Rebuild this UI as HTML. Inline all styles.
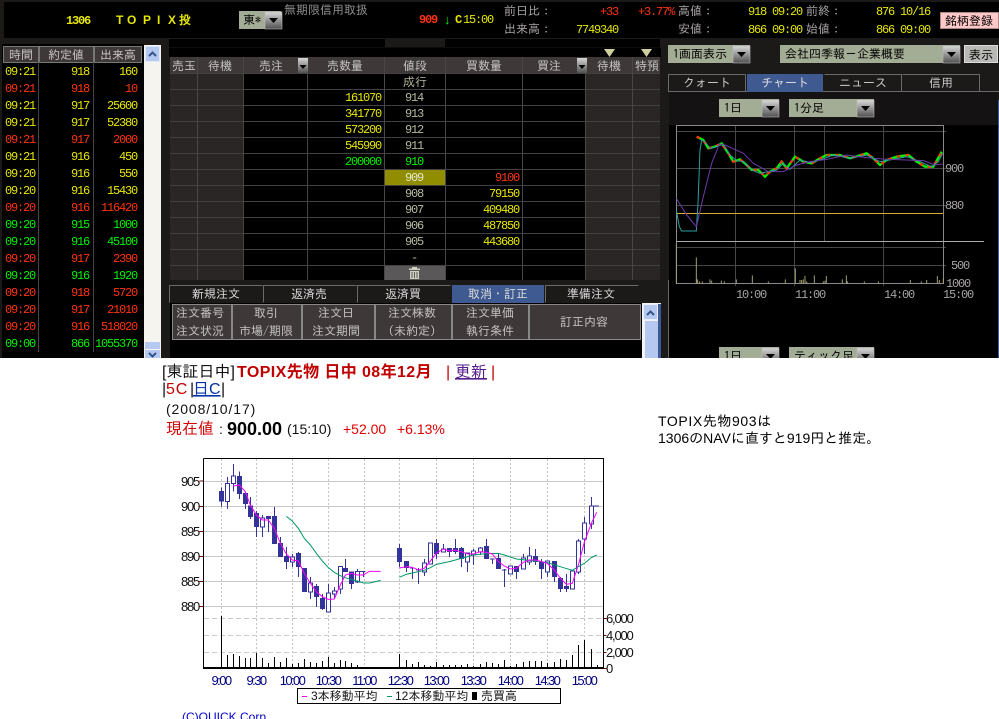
<!DOCTYPE html>
<html><head><meta charset="utf-8"><style>
html,body{margin:0;padding:0;background:#fff;overflow:hidden}
svg{display:block}
text{font-family:"Liberation Sans","IPAGothic","Noto Sans CJK JP",sans-serif;font-size:12px}
.j{font-family:"IPAGothic","Noto Sans CJK JP",sans-serif;font-size:12px}
.m{font-family:"Liberation Mono",monospace;font-size:12px;letter-spacing:-1.2px}
.e{text-anchor:end}.c{text-anchor:middle}
.y{fill:#e6e600}.r{fill:#ff3310}.g{fill:#00f000}.p{fill:#b8b8a0}.w{fill:#c8c4c4}.k{fill:#a8a4a4}
.n{fill:#000080;font-size:13px;letter-spacing:-1.6px;text-anchor:middle}
.a{fill:#111;font-size:13px;letter-spacing:-1.2px}
</style></head><body>
<svg width="999" height="719" viewBox="0 0 999 719" xmlns="http://www.w3.org/2000/svg">
<defs>
<linearGradient id="b" x1="0" y1="0" x2="0" y2="1"><stop offset="0" stop-color="#d8d8d8"/><stop offset="1" stop-color="#505050"/></linearGradient>
<g id="ar"><rect width="17" height="17" fill="url(#b)" stroke="#bbb" stroke-width=".6"/><path d="M4 6h9l-4.500 5z" fill="#000"/></g>
<g id="ar2"><rect width="10" height="15" fill="url(#b)"/><path d="M1.500 7h7l-3.500 4z" fill="#000"/></g>
</defs>
<rect width="999" height="358" fill="#1c1919"/>
<!-- header -->
<rect x="4" y="2" width="995" height="36" fill="#000"/>
<text x="66" y="24" class="m y" style="font-weight:bold">1306</text>
<text x="116 127 143 157 168 179" y="24" class="y" style="font-size:12px;font-weight:bold">TOPIX投</text>
<rect x="239" y="11" width="42" height="18" fill="#a3ad95"/><text x="243" y="24" class="j" style="fill:#000">東*</text><use href="#ar" x="265" y="12"/>
<text x="284" y="14" class="j" style="fill:#909090">無期限信用取扱</text>
<text x="419" y="23" class="m r" style="font-weight:bold">909</text>
<text x="444" y="24" class="g" style="font-size:13px">↓</text>
<text x="455" y="23" class="m y" style="font-weight:bold">C</text>
<text x="463" y="23" class="m y">15:00</text>
<text x="504" y="15" class="j k">前日比：</text><text x="504" y="33" class="j k">出来高：</text>
<text x="618" y="15" class="m e r">+33</text><text x="674" y="15" class="m e r">+3.77%</text><text x="618" y="33" class="m e y">7749340</text>
<text x="678" y="15" class="j k">高値：</text><text x="678" y="33" class="j k">安値：</text>
<text x="748" y="15" class="m y">918 09:20</text><text x="748" y="33" class="m y">866 09:00</text>
<text x="806" y="15" class="j k">前終：</text><text x="806" y="33" class="j k">始値：</text>
<text x="876" y="15" class="m y">876 10/16</text><text x="876" y="33" class="m y">866 09:00</text>
<rect x="940.500" y="12.500" width="58" height="16" fill="#ffc8c8" stroke="#a88"/><text x="945" y="25" class="j" style="fill:#000">銘柄登録</text>

<!-- left table -->
<rect x="2" y="44" width="142" height="314" fill="#000"/>
<g fill="#3e3838" stroke="#777" stroke-width="1"><rect x="3.500" y="46.500" width="35" height="16"/><rect x="39.500" y="46.500" width="54" height="16"/><rect x="94.500" y="46.500" width="47" height="16"/></g>
<text x="21" y="59" class="j c w">時間</text><text x="66" y="59" class="j c w">約定値</text><text x="118" y="59" class="j c w">出来高</text>
<path d="M38.500 62V352M93.500 62V352" stroke="#444"/>
<g>
<text class="m y" x="5" y="75">09:21</text><text class="m e y" x="89" y="75">918</text><text class="m e y" x="137" y="75">160</text>
<text class="m r" x="5" y="92">09:21</text><text class="m e r" x="89" y="92">918</text><text class="m e r" x="137" y="92">10</text>
<text class="m y" x="5" y="109">09:21</text><text class="m e y" x="89" y="109">917</text><text class="m e y" x="137" y="109">25600</text>
<text class="m y" x="5" y="126">09:21</text><text class="m e y" x="89" y="126">917</text><text class="m e y" x="137" y="126">52380</text>
<text class="m r" x="5" y="143">09:21</text><text class="m e r" x="89" y="143">917</text><text class="m e r" x="137" y="143">2000</text>
<text class="m y" x="5" y="160">09:21</text><text class="m e y" x="89" y="160">916</text><text class="m e y" x="137" y="160">450</text>
<text class="m y" x="5" y="177">09:20</text><text class="m e y" x="89" y="177">916</text><text class="m e y" x="137" y="177">550</text>
<text class="m y" x="5" y="194">09:20</text><text class="m e y" x="89" y="194">916</text><text class="m e y" x="137" y="194">15430</text>
<text class="m r" x="5" y="211">09:20</text><text class="m e r" x="89" y="211">916</text><text class="m e r" x="137" y="211">116420</text>
<text class="m g" x="5" y="228">09:20</text><text class="m e g" x="89" y="228">915</text><text class="m e g" x="137" y="228">1000</text>
<text class="m g" x="5" y="245">09:20</text><text class="m e g" x="89" y="245">916</text><text class="m e g" x="137" y="245">45100</text>
<text class="m r" x="5" y="262">09:20</text><text class="m e r" x="89" y="262">917</text><text class="m e r" x="137" y="262">2390</text>
<text class="m g" x="5" y="279">09:20</text><text class="m e g" x="89" y="279">916</text><text class="m e g" x="137" y="279">1920</text>
<text class="m r" x="5" y="296">09:20</text><text class="m e r" x="89" y="296">918</text><text class="m e r" x="137" y="296">5720</text>
<text class="m r" x="5" y="313">09:20</text><text class="m e r" x="89" y="313">917</text><text class="m e r" x="137" y="313">21010</text>
<text class="m r" x="5" y="330">09:20</text><text class="m e r" x="89" y="330">916</text><text class="m e r" x="137" y="330">518020</text>
<text class="m g" x="5" y="347">09:00</text><text class="m e g" x="89" y="347">866</text><text class="m e g" x="137" y="347">1055370</text>
</g>
<!-- left scrollbar -->
<rect x="144" y="45" width="17" height="313" fill="#f5f4ee"/>
<rect x="145.500" y="46.500" width="14" height="15" fill="#b4c8f0" stroke="#dfe8fa"/><path d="M149 56l3.500-3.500L156 56" fill="none" stroke="#33558c" stroke-width="2"/>
<rect x="145" y="342" width="15" height="7" fill="#b4c8f0"/><rect x="145" y="350" width="15" height="8" fill="#b4c8f0"/><path d="M149 353l3.500 3.500L156 353" fill="none" stroke="#33558c" stroke-width="2"/>

<!-- order book -->
<rect x="169" y="39" width="216" height="8" fill="#000"/><rect x="445" y="39" width="215" height="8" fill="#000"/>
<rect x="169" y="47.500" width="492" height="10" fill="#000"/>
<path d="M604 49h11l-5.500 8zM641 49h11l-5.500 8z" fill="#cfcfa0"/>
<rect x="170" y="57" width="490" height="223" fill="#000"/>
<rect x="170" y="73" width="74" height="207" fill="#2a2626"/><rect x="586" y="73" width="74" height="207" fill="#2a2626"/>
<rect x="170" y="57" width="490" height="16" fill="#3e3838"/>
<path d="M170 73.500H660M170 89.500H660M170 105.500H660M170 121.500H660M170 137.500H660M170 153.500H660M170 169.500H660M170 185.500H660M170 201.500H660M170 217.500H660M170 233.500H660M170 249.500H660M170 265.500H660" stroke="#434040"/>
<path d="M197.500 57V280M243.500 57V280M307.500 57V280M384.500 57V280M445.500 57V280M522.500 57V280M585.500 57V280M632.500 57V280" stroke="#4a4646"/>
<rect x="385" y="170" width="60" height="15" fill="#908e00"/>
<rect x="385" y="266" width="60" height="14" fill="#5a5858"/>
<g fill="#d0d0c0"><rect x="409" y="268.500" width="11" height="1.500"/><rect x="412" y="267" width="5" height="1.500"/><path d="M410 271h9v8h-9zM411.500 272v6h1v-6zM414 272v6h1v-6zM416.500 272v6h1v-6z" fill-rule="evenodd"/></g>
<g>
<text x="184" y="70" class="j c w">売玉</text><text x="220" y="70" class="j c w">待機</text><text x="271" y="70" class="j c w">売注</text><text x="345" y="70" class="j c w">売数量</text><text x="415" y="70" class="j c w">値段</text><text x="484" y="70" class="j c w">買数量</text><text x="549" y="70" class="j c w">買注</text><text x="609" y="70" class="j c w">待機</text><text x="647" y="70" class="j c w">特預</text>
</g>
<use href="#ar2" x="298" y="58"/><use href="#ar2" x="577" y="58"/>
<text x="415" y="86" class="j c p">成行</text>
<text x="414" y="101" class="m c p">914</text><text x="414" y="117" class="m c p">913</text><text x="414" y="133" class="m c p">912</text><text x="414" y="149" class="m c p">911</text><text x="414" y="165" class="m c g">910</text><text x="414" y="181" class="m c" style="fill:#e8e8d0">909</text><text x="414" y="197" class="m c p">908</text><text x="414" y="213" class="m c p">907</text><text x="414" y="229" class="m c p">906</text><text x="414" y="245" class="m c p">905</text><text x="414" y="261" class="m c p">-</text>
<text x="381" y="101" class="m e y">161070</text><text x="381" y="117" class="m e y">341770</text><text x="381" y="133" class="m e y">573200</text><text x="381" y="149" class="m e y">545990</text><text x="381" y="165" class="m e g">200000</text>
<text x="519" y="181" class="m e r">9100</text><text x="519" y="197" class="m e y">79150</text><text x="519" y="213" class="m e y">409480</text><text x="519" y="229" class="m e y">487850</text><text x="519" y="245" class="m e y">443680</text>

<!-- order tabs -->
<g fill="#1c1919" stroke="#6a6a6a"><path d="M169.500 302.500V285.500H262.500M263.500 302.500V285.500H356.500M357.500 302.500V285.500H450.500M545.500 302.500V285.500H638.500"/></g>
<rect x="452" y="285" width="92" height="18" fill="#3f5a90"/>
<text x="216" y="298" class="j c" style="fill:#ddd">新規注文</text><text x="309" y="298" class="j c" style="fill:#ddd">返済売</text><text x="403" y="298" class="j c" style="fill:#ddd">返済買</text><text x="498" y="298" class="j c" style="fill:#ddd">取消・訂正</text><text x="591" y="298" class="j c" style="fill:#ddd">準備注文</text>
<rect x="170" y="303" width="472" height="55" fill="#000"/>
<g fill="#3e3838" stroke="#888"><rect x="172.500" y="304.500" width="59" height="35"/><rect x="232.500" y="304.500" width="69" height="35"/><rect x="302.500" y="304.500" width="72" height="35"/><rect x="375.500" y="304.500" width="76" height="35"/><rect x="452.500" y="304.500" width="76" height="35"/><rect x="529.500" y="304.500" width="111" height="35"/></g>
<g>
<text x="200" y="317" class="j c w">注文番号</text><text x="200" y="335" class="j c w">注文状況</text>
<text x="266" y="317" class="j c w">取引</text><text x="266" y="335" class="j c w">市場/期限</text>
<text x="336" y="317" class="j c w">注文日</text><text x="336" y="335" class="j c w">注文期間</text>
<text x="412" y="317" class="j c w">注文株数</text><text x="412" y="335" class="j c w">（未約定）</text>
<text x="490" y="317" class="j c w">注文単価</text><text x="490" y="335" class="j c w">執行条件</text>
<text x="584" y="326" class="j c w">訂正内容</text>
</g>
<rect x="642" y="303" width="19" height="55" fill="#f4f4f4"/><rect x="658" y="304" width="3" height="54" fill="#3a5a98"/>
<rect x="643.500" y="304.500" width="14" height="15" fill="#b4c8f0" stroke="#e8eefc"/><path d="M647 315l3.500-3.500L654 315" fill="none" stroke="#33558c" stroke-width="2"/>
<rect x="645" y="321" width="13" height="37" fill="#b4c8f0"/>
<rect x="668" y="280" width="1" height="78" fill="#666"/>

<!-- right controls -->
<rect x="668" y="45" width="82" height="18" fill="#a3ad95"/><text x="673" y="58" class="j" style="fill:#000">1画面表示</text><use href="#ar" x="733" y="46"/>
<rect x="780" y="45" width="180" height="18" fill="#a3ad95"/><text x="785" y="58" class="j" style="fill:#000">会社四季報－企業概要</text><use href="#ar" x="943" y="46"/>
<rect x="964.500" y="45.500" width="33" height="17" fill="#b8b8b4" stroke="#ddd"/><text x="981" y="59" class="j c" style="fill:#000">表示</text>
<!-- right tabs -->
<rect x="669" y="92" width="329" height="33" fill="#141212"/><rect x="669" y="125" width="329" height="233" fill="#000"/>
<rect x="998" y="100" width="1" height="258" fill="#3a5a98"/>
<path d="M668.500 91.500V74.500H745.500M745.500 74.500V91.500M824.500 74.500H901.500V91.500M902.500 74.500H979.500V91.500M668 91.500H999" stroke="#6a6a6a" fill="none"/>
<rect x="747" y="74" width="76" height="18" fill="#3f5a90"/>
<text x="707" y="87" class="j c" style="fill:#ccc">クォート</text><text x="785" y="87" class="j c" style="fill:#ddd">チャート</text><text x="863" y="87" class="j c" style="fill:#ccc">ニュース</text><text x="941" y="87" class="j c" style="fill:#ccc">信用</text>
<rect x="719" y="99" width="60" height="18" fill="#a3ad95"/><text x="724" y="112" class="j" style="fill:#000">1日</text><use href="#ar" x="762" y="100"/>
<rect x="789" y="99" width="85" height="18" fill="#a3ad95"/><text x="794" y="112" class="j" style="fill:#000">1分足</text><use href="#ar" x="857" y="100"/>
<!-- small chart -->
<path d="M676 131.500H946M676 168.500H946M676 205.500H946M676 265.500H946M676 247.500H946M735.500 125V286M794.500 125V286M824.500 125V241M883.500 125V286" stroke="#484646" fill="none"/>
<rect x="676.500" y="125.500" width="267" height="158" fill="none" stroke="#8a8a8a"/>
<path d="M676 241.500H984" stroke="#aaa"/><path d="M676 213.500H943" stroke="#d8ac30"/>
<g transform="translate(660,120) scale(.33333)">
<path d="M49 490V370M109 490V412M112 490V478M118 490V484M127 490V484M150 490V478M155 490V482M184 490V482M193 490V484M229 490V478M277 490V466M325 490V484M376 490V478M406 490V445M420 490V480M425 490V480M430 490V478M435 490V468M440 490V484M463 490V466M490 490V484M495 490V482M499 490V468M547 490V478M559 490V466M562 490V484M613 490V484M655 490V484M751 490V480M784 490V484M800 490V480M832 490V468M838 490V480M850 490V475" stroke="#a0a070" stroke-width="3" fill="none"/>
<g fill="none" stroke-width="7">
<polyline stroke="#00f000" points="110,50 130,60 145,85 165,80 185,70 205,100 220,125 240,118 260,135 275,150 295,150 315,170 330,155 350,145 365,125 380,145 405,110 430,125 455,130 480,115 500,105 540,105 570,115 620,100 640,115 660,135 680,120 710,110 745,105 770,125 795,140 820,140 845,95"/>
<polyline stroke="#ff3310" stroke-dasharray="10 16" points="110,50 130,60 145,85 165,80 185,70 205,100 220,125 240,118 260,135 275,150 295,150 315,170 330,155 350,145 365,125 380,145 405,110 430,125 455,130 480,115 500,105 540,105 570,115 620,100 640,115 660,135 680,120 710,110 745,105 770,125 795,140 820,140 845,95"/>
</g>
<polyline fill="none" stroke="#2aa0a0" stroke-width="3" points="49,270 58,320 65,333 109,333 114,250 120,90 125,60 135,65 150,85 170,80 190,72 210,105 230,122 250,125 275,150 300,160 325,155 350,150 370,130 390,148 420,120 450,128 480,120 520,105 570,115 620,105 660,125 700,118 740,110 780,125 815,140 835,125 848,100"/>
<polyline fill="none" stroke="#6a3aa8" stroke-width="3" points="49,235 80,285 109,320 130,230 155,130 178,72 195,75 250,100 280,130 325,155 370,155 410,135 450,125 500,118 560,105 620,113 680,118 740,120 790,122 825,135 848,132"/>
</g>
<text x="945" y="172" class="m k">900</text><text x="945" y="209" class="m k">880</text><text x="951" y="269" class="m k">500</text><text x="946" y="287" class="m k">1000</text>
<text x="736" y="298" class="m k">10:00</text><text x="795" y="298" class="m k">11:00</text><text x="884" y="298" class="m k">14:00</text><text x="943" y="298" class="m k">15:00</text>
<rect x="719" y="347" width="60" height="11" fill="#a3ad95"/><text x="724" y="360" class="j" style="fill:#000">1日</text><use href="#ar" x="762" y="348"/>
<rect x="789" y="347" width="85" height="11" fill="#a3ad95"/><text x="794" y="360" class="j" style="fill:#000">ティック足</text><use href="#ar" x="857" y="348"/>

<!-- white area -->
<rect y="358" width="999" height="361" fill="#fff"/>
<text x="162" y="377" style="font-size:16px;fill:#111">[東証日中]</text>
<text x="237" y="377" style="font-size:16px;font-weight:bold;fill:#c00000;letter-spacing:.4px;font-family:'Liberation Sans','Noto Sans CJK JP',sans-serif">TOPIX先物 日中 08年12月</text>
<text x="446" y="377" style="font-size:16px;fill:#c00000">|</text>
<text x="455" y="377" style="font-size:16px;fill:#551a8b;text-decoration:underline">更新</text>
<text x="491" y="377" style="font-size:16px;fill:#c00000">|</text>
<text x="162" y="394" style="font-size:16px;fill:#111">|</text><text x="166" y="394" style="font-size:16px;fill:#c00000;letter-spacing:.8px">5C</text><text x="190" y="394" style="font-size:16px;fill:#111">|</text><text x="193" y="394" style="font-size:16px;fill:#0033aa;text-decoration:underline">日C</text><text x="221" y="394" style="font-size:16px;fill:#111">|</text>
<text x="166" y="414" style="font-size:14px;fill:#111;letter-spacing:.9px">(2008/10/17)</text>
<text x="166" y="434" style="font-size:16px;fill:#d00000">現在値</text><text x="219" y="434" style="font-size:14px;fill:#111">:</text>
<text x="227" y="435" style="font-size:18px;font-weight:bold;fill:#000">900.00</text>
<text x="287" y="434" style="font-size:14px;fill:#111">(15:10)</text>
<text x="343" y="434" style="font-size:14px;fill:#e00000">+52.00</text><text x="397" y="434" style="font-size:14px;fill:#e00000">+6.13%</text>
<text x="658" y="426" style="font-size:14px;fill:#000;letter-spacing:.6px">TOPIX先物903は</text>
<text x="658" y="443" style="font-size:14px;fill:#000">1306のNAVに直すと919円と推定。</text>

<!-- main chart -->
<rect x="203.500" y="458.500" width="400" height="210" fill="#fff"/>
<path d="M204 481.500H603M204 506.500H603M204 531.500H603M204 556.500H603M204 581.500H603M204 606.500H603" stroke="#c8c8c8"/>
<path d="M204 618.500H603M204 635.500H603M204 652.500H603" stroke="#c8c8c8" stroke-dasharray="5 3"/>
<path d="M221.500 459V668M256.500 459V668M292.500 459V668M328.500 459V668M364.500 459V668M399.500 459V668M436.500 459V668M473.500 459V668M510.500 459V668M547.500 459V668M584.500 459V668" stroke="#c4c4c4" stroke-dasharray="2 2"/>
<g transform="translate(170,455) scale(.33333)">
<!-- volume -->
<path d="M154 640V483M172 640V600M190 640V597M208 640V603M226 640V609M241 640V609M259 640V594M277 640V609M295 640V624M313 640V606M331 640V621M349 640V609M367 640V627M385 640V624M403 640V612M421 640V621M439 640V624M457 640V618M475 640V606M493 640V624M511 640V615M526 640V618M544 640V624M562 640V630" stroke="#000" stroke-width="3" fill="none" shape-rendering="crispEdges"/>
<!-- wicks -->
<path d="M154 97V155M172 66V162M190 27V110M208 50V132M226 114V162M241 126V192M259 168V246M277 180V246M295 183V231M313 156V267M331 246V306M349 276V342M367 297V336M385 291V366M403 339V411M421 366V432M439 387V456M457 417V465M475 387V471M493 396V432M511 334V417M526 312V351M544 349V402M562 342V384M580 349V366M570 349H586" stroke="#333399" stroke-width="3" fill="none" shape-rendering="crispEdges"/>
<!-- filled bodies -->
<path d="M147 108h15v32h-15zM201 63h15v54h-15zM219 114h15v33h-15zM234 152h15v34h-15zM252 174h15v42h-15zM288 183h15v9h-15zM306 183h15v84h-15zM324 264h15v42h-15zM342 303h15v18h-15zM378 294h15v42h-15zM396 339h15v72h-15zM432 393h15v33h-15zM450 429h15v33h-15zM519 339h15v12h-15zM537 349h15v38h-15z" fill="#333399" shape-rendering="crispEdges"/>
<!-- hollow -->
<g fill="#fff" stroke="#333399" stroke-width="3" shape-rendering="crispEdges"><rect x="166" y="85" width="13" height="55"/><rect x="184" y="63" width="13" height="22"/><rect x="271" y="189" width="13" height="27"/><rect x="361" y="306" width="13" height="15"/><rect x="415" y="384" width="13" height="27"/><rect x="469" y="414" width="13" height="57"/><rect x="487" y="408" width="13" height="9"/><rect x="505" y="334" width="13" height="68"/><rect x="556" y="349" width="13" height="32"/></g>
<polyline fill="none" stroke="#009966" stroke-width="3" points="349,184 367,198 385,220 403,250 421,270 439,295 457,318 475,338 493,352 511,362 526,368 544,374 562,378 580,384 600,384 632,376"/>
<polyline fill="none" stroke="#ff00ff" stroke-width="3" points="190,93 208,90 226,110 241,150 259,180 277,195 295,195 313,220 331,265 349,297 367,315 385,318 403,355 421,385 439,410 457,425 475,433 493,432 511,390 526,360 544,355 562,360 580,360 598,349 632,349"/>
<path d="M88 78h12M88 154h12M88 229h12M88 304h12M88 379h12M88 455h12" stroke="#800000" stroke-width="3" fill="none" shape-rendering="crispEdges"/>
</g>
<g transform="translate(390,455) scale(.33333)">
<path d="M28 640V597M49 640V615M67 640V627M85 640V621M103 640V630M121 640V633M139 640V621M160 640V630M178 640V630M196 640V630M214 640V630M232 640V627M250 640V633M271 640V627M289 640V621M307 640V624M325 640V627M343 640V615M361 640V633M379 640V627M400 640V621M418 640V618M436 640V618M454 640V618M472 640V624M493 640V621M511 640V612M529 640V615M547 640V600M565 640V570M583 640V555M604 640V582M622 640V630" stroke="#000" stroke-width="3" fill="none" shape-rendering="crispEdges"/>
<path d="M28 267V336M49 318V351M67 339V372M60 339H74M85 339V387M78 345H92M103 312V363M121 264V327M139 252V312M160 267V291M178 279V306M196 252V297M214 276V336M232 294V351M250 282V330M271 276V300M289 252V312M307 312V327M300 312H314M325 297V342M343 342V396M336 345H350M361 333V357M379 333V372M400 297V342M418 276V330M436 282V330M454 312V372M472 318V366M493 318V381M511 366V411M529 357V411M547 348V402M565 252V357M583 186V297M604 126V222M604 153H627" stroke="#333399" stroke-width="3" fill="none" shape-rendering="crispEdges"/>
<path d="M21 279h15v42h-15zM42 318h15v21h-15zM132 264h15v33h-15zM171 279h15v12h-15zM189 279h15v12h-15zM207 279h15v33h-15zM282 273h15v39h-15zM318 309h15v33h-15zM372 333h15v18h-15zM429 303h15v18h-15zM447 321h15v21h-15zM486 318h15v48h-15zM504 369h15v33h-15zM522 393h15v9h-15z" fill="#333399" shape-rendering="crispEdges"/>
<g fill="#fff" stroke="#333399" stroke-width="3" shape-rendering="crispEdges"><rect x="97" y="324" width="13" height="27"/><rect x="115" y="264" width="13" height="63"/><rect x="154" y="282" width="13" height="9"/><rect x="226" y="294" width="13" height="27"/><rect x="244" y="288" width="13" height="12"/><rect x="265" y="279" width="13" height="12"/><rect x="355" y="333" width="13" height="24"/><rect x="394" y="309" width="13" height="33"/><rect x="412" y="303" width="13" height="18"/><rect x="466" y="318" width="13" height="33"/><rect x="541" y="348" width="13" height="54"/><rect x="559" y="258" width="13" height="93"/><rect x="577" y="204" width="13" height="48"/><rect x="598" y="153" width="13" height="54"/></g>
<polyline fill="none" stroke="#009966" stroke-width="3" points="28,367 49,358 85,350 103,346 121,338 139,328 178,320 214,310 250,300 289,296 325,295 343,300 379,312 418,316 454,320 472,323 511,335 547,346 565,335 583,325 604,308 620,300"/>
<polyline fill="none" stroke="#ff00ff" stroke-width="3" points="28,339 49,335 67,337 85,345 103,340 121,318 139,295 160,282 178,288 196,285 214,290 232,297 250,297 271,290 289,292 307,297 325,320 343,333 361,342 379,340 400,322 418,315 436,315 454,320 472,325 493,345 511,370 529,388 547,385 565,330 583,262 604,205 620,172"/>
<path d="M640 490h10M640 541h10M640 592h10M640 640h10" stroke="#800000" stroke-width="3" fill="none" shape-rendering="crispEdges"/>
</g>
<path d="M203.500 458.500H603.500V668M203.500 458.500V668" fill="none" stroke="#000"/>
<rect x="203" y="667" width="401" height="2" fill="#000"/>
<g>
<text x="181" y="486" class="a">905</text><text x="181" y="511" class="a">900</text><text x="181" y="536" class="a">895</text><text x="181" y="561" class="a">890</text><text x="181" y="586" class="a">885</text><text x="181" y="611" class="a">880</text>
<text x="606" y="623" class="a">6,000</text><text x="606" y="640" class="a">4,000</text><text x="606" y="657" class="a">2,000</text><text x="606" y="673" class="a">0</text>
</g>
<text x="221" y="685" class="n">9:00</text><text x="256" y="685" class="n">9:30</text><text x="292" y="685" class="n">10:00</text><text x="328" y="685" class="n">10:30</text><text x="364" y="685" class="n">11:00</text><text x="400" y="685" class="n">12:30</text><text x="436" y="685" class="n">13:00</text><text x="473" y="685" class="n">13:30</text><text x="510" y="685" class="n">14:00</text><text x="547" y="685" class="n">14:30</text><text x="584" y="685" class="n">15:00</text>
<rect x="297.500" y="688.500" width="263" height="15" fill="#fff" stroke="#000"/>
<rect x="302" y="696" width="5" height="1" fill="#f0f"/><rect x="387" y="696" width="5" height="1" fill="#096"/><rect x="472" y="692" width="5" height="8" fill="#000"/>
<text x="311" y="700" style="fill:#111">3本移動平均</text><text x="395" y="700" style="fill:#111">12本移動平均</text><text x="481" y="700" style="fill:#111">売買高</text>
<text x="182" y="721" style="font-size:12px;fill:#0000cc">(C)QUICK Corp</text>
</svg>
</body></html>
